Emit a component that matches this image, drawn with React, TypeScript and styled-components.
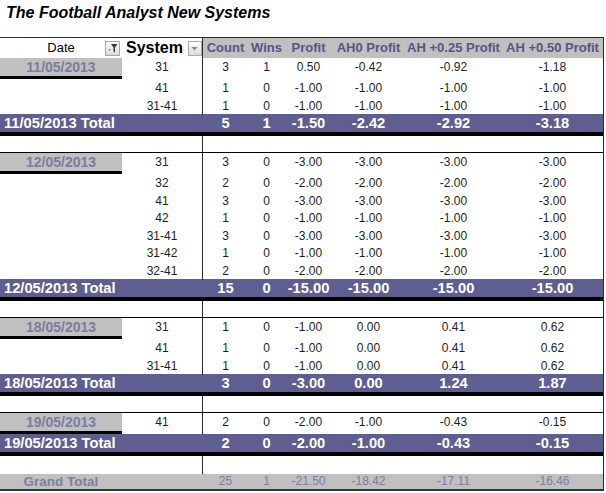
import * as React from 'react';
import styled, { createGlobalStyle } from 'styled-components';

const GlobalStyle = createGlobalStyle`
  html, body {
    margin: 0;
    padding: 0;
    background: #ffffff;
    font-family: "Liberation Sans", Arial, sans-serif;
  }
`

const COLS = '122px 81px 45px 37px 47px 73px 97px 101px'
const GRAY = '#c0c0c0'
const BAR = '#5e5e90'

type Line = [string, number, number, string, string, string, string]
type Group = { date: string; rows: Line[]; total: (string | number)[] }

const groups: Group[] = [
  {
    date: '11/05/2013',
    rows: [
      ['31', 3, 1, '0.50', '-0.42', '-0.92', '-1.18'],
      ['41', 1, 0, '-1.00', '-1.00', '-1.00', '-1.00'],
      ['31-41', 1, 0, '-1.00', '-1.00', '-1.00', '-1.00'],
    ],
    total: [5, 1, '-1.50', '-2.42', '-2.92', '-3.18'],
  },
  {
    date: '12/05/2013',
    rows: [
      ['31', 3, 0, '-3.00', '-3.00', '-3.00', '-3.00'],
      ['32', 2, 0, '-2.00', '-2.00', '-2.00', '-2.00'],
      ['41', 3, 0, '-3.00', '-3.00', '-3.00', '-3.00'],
      ['42', 1, 0, '-1.00', '-1.00', '-1.00', '-1.00'],
      ['31-41', 3, 0, '-3.00', '-3.00', '-3.00', '-3.00'],
      ['31-42', 1, 0, '-1.00', '-1.00', '-1.00', '-1.00'],
      ['32-41', 2, 0, '-2.00', '-2.00', '-2.00', '-2.00'],
    ],
    total: [15, 0, '-15.00', '-15.00', '-15.00', '-15.00'],
  },
  {
    date: '18/05/2013',
    rows: [
      ['31', 1, 0, '-1.00', '0.00', '0.41', '0.62'],
      ['41', 1, 0, '-1.00', '0.00', '0.41', '0.62'],
      ['31-41', 1, 0, '-1.00', '0.00', '0.41', '0.62'],
    ],
    total: [3, 0, '-3.00', '0.00', '1.24', '1.87'],
  },
  {
    date: '19/05/2013',
    rows: [['41', 2, 0, '-2.00', '-1.00', '-0.43', '-0.15']],
    total: [2, 0, '-2.00', '-1.00', '-0.43', '-0.15'],
  },
]

const grand = [25, 1, '-21.50', '-18.42', '-17.11', '-16.46']
const headers = ['Count', 'Wins', 'Profit', 'AH0 Profit', 'AH +0.25 Profit', 'AH +0.50 Profit']

const Sheet = styled.div`
  width: 606px;
`

const Title = styled.h1`
  margin: 0;
  height: 37px;
  padding: 3px 0 0 6px;
  box-sizing: border-box;
  font-size: 16px;
  font-weight: bold;
  font-style: italic;
  color: #000;
  line-height: 19px;
`

const Table = styled.div`
  width: 604px;
  border-right: 1px solid #2a2a2a;
  box-sizing: border-box;
`

const Row = styled.div<{ $h: number }>`
  display: grid;
  grid-template-columns: ${COLS};
  height: ${p => p.$h}px;
`

const HeaderRow = styled(Row)`
  border-top: 1px solid #2a2a2a;
  font-size: 13px;
  line-height: 20px;
`

const HeadDate = styled.div`
  display: flex;
  align-items: center;
  justify-content: center;
  position: relative;
  color: #000;
`

const HeadSystem = styled.div`
  display: flex;
  align-items: center;
  padding-left: 4px;
  gap: 5px;
  font-size: 16px;
  font-weight: bold;
  color: #000;
  border-right: 1px solid #2a2a2a;
`

const HeadCell = styled.div`
  background: ${GRAY};
  color: #55558a;
  font-weight: bold;
  text-align: center;
  white-space: nowrap;
`

const DropButton = styled.span`
  display: inline-flex;
  align-items: center;
  justify-content: center;
  width: 13px;
  height: 13px;
  border: 1px solid #a8a8a8;
  background: linear-gradient(#ffffff, #dcdcdc);
`

const FilterSpot = styled(DropButton)`
  position: absolute;
  right: 2px;
  top: 3px;
`

const DateCell = styled.div<{ $first: boolean }>`
  background: ${p => (p.$first ? GRAY : 'transparent')};
  border-bottom: ${p => (p.$first ? '3px solid #000' : 'none')};
  color: #7c7c9e;
  font-size: 14px;
  font-weight: bold;
  text-align: center;
  line-height: 18px;
`

const SysCell = styled.div`
  border-right: 1px solid #2a2a2a;
  text-align: center;
`

const NumCell = styled.div`
  text-align: center;
`

const DataRow = styled(Row)`
  font-size: 12px;
  line-height: 18px;
  color: #1e1e1e;
`

const TotalRow = styled(Row)`
  background: ${BAR};
  border-bottom: 4px solid #000;
  color: #fff;
  font-size: 14.7px;
  font-weight: bold;
  line-height: 18px;
`

const TotalLabel = styled.div`
  grid-column: span 2;
  padding-left: 4px;
  white-space: nowrap;
`

const Spacer = styled(Row)<{ $line: boolean }>`
  border-bottom: ${p => (p.$line ? '1px solid #000' : 'none')};
`

const GrandRow = styled(Row)`
  background: ${GRAY};
  border-bottom: 2px solid #333;
  color: #7e7ea0;
  font-size: 12px;
  line-height: 15px;
`

const GrandLabel = styled.div`
  text-align: center;
  font-size: 13.5px;
  font-weight: bold;
`

const Funnel = () => (
  <svg width="11" height="11" viewBox="0 0 11 11">
    <path d="M1 6 L4 6 L2.5 8 Z" fill="#8a8a8a" />
    <path d="M4 1 L10.5 1 L8 4.5 L8 9.5 L6.5 8.5 L6.5 4.5 Z" fill="#3a3a3a" />
  </svg>
)

const Arrow = () => (
  <svg width="9" height="9" viewBox="0 0 9 9">
    <path d="M1.5 3 L7.5 3 L4.5 6.5 Z" fill="#8a8a8a" />
  </svg>
)

function GroupBlock({ g, last }: { g: Group; last: boolean }) {
  return (
    <>
      {g.rows.map((r, i) => (
        <DataRow key={i} $h={i === 0 ? 21 : 17.5}>
          <DateCell $first={i === 0}>{i === 0 ? g.date : ''}</DateCell>
          <SysCell>{r[0]}</SysCell>
          {r.slice(1).map((v, j) => (
            <NumCell key={j}>{v}</NumCell>
          ))}
        </DataRow>
      ))}
      <TotalRow $h={18}>
        <TotalLabel>{g.date} Total</TotalLabel>
        {g.total.map((v, j) => (
          <NumCell key={j}>{v}</NumCell>
        ))}
      </TotalRow>
      <Spacer $h={last ? 18 : 16} $line={!last}>
        <div />
        <SysCell />
      </Spacer>
    </>
  )
}

export default function App() {
  return (
    <Sheet>
      <GlobalStyle />
      <Title>The Football Analyst New Systems</Title>
      <Table>
        <HeaderRow $h={20}>
          <HeadDate>
            Date
            <FilterSpot>
              <Funnel />
            </FilterSpot>
          </HeadDate>
          <HeadSystem>
            System
            <DropButton>
              <Arrow />
            </DropButton>
          </HeadSystem>
          {headers.map(h => (
            <HeadCell key={h}>{h}</HeadCell>
          ))}
        </HeaderRow>
        {groups.map((g, i) => (
          <GroupBlock key={g.date} g={g} last={i === groups.length - 1} />
        ))}
        <GrandRow $h={15}>
          <GrandLabel>Grand Total</GrandLabel>
          <div />
          {grand.map((v, j) => (
            <NumCell key={j}>{v}</NumCell>
          ))}
        </GrandRow>
      </Table>
    </Sheet>
  )
}
